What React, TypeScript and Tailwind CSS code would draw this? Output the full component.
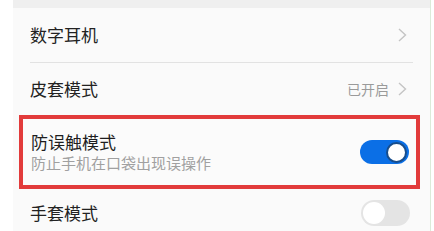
import React from "react";

const font = { fontFamily: '"Noto Sans CJK SC", "Noto Sans", sans-serif' };

function Chevron() {
  return (
    <svg width="9" height="14" viewBox="0 0 9 14" className="shrink-0">
      <path d="M1 1 L7.5 7 L1 13" fill="none" stroke="#c4c4c4" strokeWidth="1.4" />
    </svg>
  );
}

export default function App() {
  return (
    <div className="w-[434px] h-[231px] bg-white flex overflow-hidden" style={font}>
      <div className="ml-[13px] w-[418px] h-full bg-[#fafafa] border-r border-[#dcebd9] flex flex-col">
        <div className="h-[8px] bg-[#efefef] shrink-0" />
        <div className="h-[54px] shrink-0 flex items-center justify-between pl-[17px] pr-[23px]">
          <span className="text-[17px] text-[#222]">数字耳机</span>
          <Chevron />
        </div>
        <div className="mx-[17px] h-px bg-[#e2e2e2] shrink-0" />
        <div className="h-[52px] shrink-0 flex items-center justify-between pl-[17px] pr-[23px]">
          <span className="text-[17px] text-[#222]">皮套模式</span>
          <div className="flex items-center gap-[9px]">
            <span className="text-[14px] text-[#9a9a9a]">已开启</span>
            <Chevron />
          </div>
        </div>
        <div className="ml-[6px] mr-[10px] h-[74px] shrink-0 border-4 border-[#e23b3b] bg-[#fbfbfb] flex items-center justify-between pl-[8px] pr-[7px]">
          <div className="flex flex-col leading-none">
            <span className="text-[17px] text-[#1e1e1e] leading-[22px]">防误触模式</span>
            <span className="text-[15px] text-[#a0a0a0] leading-[20px]">防止手机在口袋出现误操作</span>
          </div>
          <div className="w-[49px] h-[24px] rounded-full bg-[#0b6fe6] flex items-center justify-end pr-[2px]">
            <div className="w-[21px] h-[21px] rounded-full bg-white border-2 border-[#174d8c]" />
          </div>
        </div>
        <div className="flex-1 flex items-center justify-between pl-[17px] pr-[20px] pt-[6px]">
          <span className="text-[17px] text-[#222]">手套模式</span>
          <div className="w-[49px] h-[26px] rounded-full bg-[#e4e4e4] flex items-center pl-[2px]">
            <div className="w-[22px] h-[22px] rounded-full bg-white" />
          </div>
        </div>
      </div>
    </div>
  );
}
